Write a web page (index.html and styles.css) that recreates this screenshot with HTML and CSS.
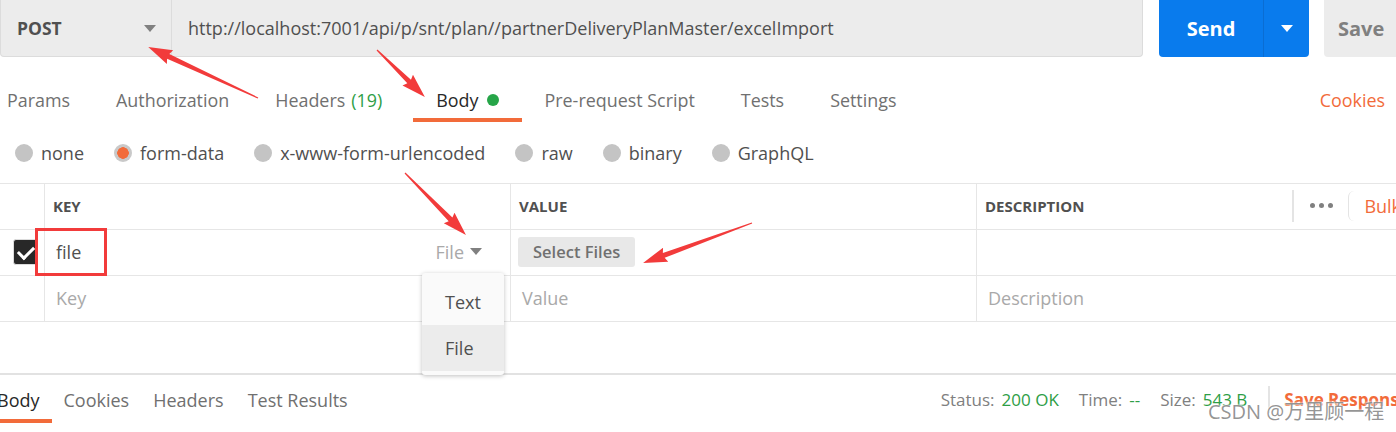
FILE: index.html
```html
<!DOCTYPE html>
<html lang="en">
  <head>
    <meta charset="UTF-8" />
    <meta name="viewport" content="width=device-width, initial-scale=1.0" />
    <title>Postman - excelImport</title>
    <link rel="stylesheet" href="styles.css">
  </head>
  <body>
    <div class="app">
      <div class="request-bar">
        <div class="method">POST <span class="caret"></span></div>
        <div class="url">http://localhost:7001/api/p/snt/plan//partnerDeliveryPlanMaster/excelImport</div>
        <div class="send-group">
          <button class="send">Send</button>
          <button class="send-more"><span class="caret caret-white"></span></button>
        </div>
        <button class="save">Save</button>
      </div>

      <div class="tabs">
        <a class="tab">Params</a>
        <a class="tab">Authorization</a>
        <a class="tab tab-headers">Headers <span class="count">(19)</span></a>
        <a class="tab active">Body <span class="dot"></span></a>
        <a class="tab">Pre-request Script</a>
        <a class="tab">Tests</a>
        <a class="tab">Settings</a>
        <a class="cookies">Cookies</a>
      </div>

      <div class="body-types">
        <label class="opt"><span class="radio"></span>none</label>
        <label class="opt"><span class="radio checked"></span>form-data</label>
        <label class="opt"><span class="radio"></span>x-www-form-urlencoded</label>
        <label class="opt"><span class="radio"></span>raw</label>
        <label class="opt"><span class="radio"></span>binary</label>
        <label class="opt"><span class="radio"></span>GraphQL</label>
      </div>

      <div class="kv-table">
        <div class="cell head"></div>
        <div class="cell head th">KEY</div>
        <div class="cell head th">VALUE</div>
        <div class="cell head th last">
          DESCRIPTION
          <div class="head-tools">
            <span class="sep"></span>
            <span class="dots"><i></i><i></i><i></i></span>
            <span class="bulk">Bulk Edit</span>
          </div>
        </div>

        <div class="cell check-cell"><span class="checkbox"></span></div>
        <div class="cell key-cell">
          <span class="value-text">file</span>
          <span class="type-select">File <span class="caret"></span></span>
          <ul class="type-menu">
            <li>Text</li>
            <li class="hover">File</li>
          </ul>
        </div>
        <div class="cell"><button class="select-files">Select Files</button></div>
        <div class="cell last"></div>

        <div class="cell"></div>
        <div class="cell placeholder">Key</div>
        <div class="cell placeholder">Value</div>
        <div class="cell placeholder last">Description</div>
      </div>

      <div class="response-bar">
        <div class="res-tabs">
          <a class="res-tab active">Body</a>
          <a class="res-tab">Cookies</a>
          <a class="res-tab">Headers</a>
          <a class="res-tab">Test Results</a>
        </div>
        <div class="res-meta">
          <span class="label">Status:</span><span class="ok">200 OK</span>
          <span class="label">Time:</span><span class="ok">--</span>
          <span class="label">Size:</span><span class="ok">543 B</span>
          <span class="meta-sep"></span>
          <span class="save-res">Save Response</span>
        </div>
      </div>

      <!-- red annotations drawn on top of the screenshot -->
      <svg class="marks" width="1396" height="432" viewBox="0 0 1396 432">
        <g fill="#f23b3b">
          <polygon transform="translate(258 98) rotate(204.9)" points="0,-0.6 99,-2.6 97,-7.5 121,0 97,7.5 99,2.6 0,0.6" />
          <polygon transform="translate(377 50) rotate(44.4)" points="0,-0.6 45,-2.6 43,-7.5 67,0 43,7.5 45,2.6 0,0.6" />
          <polygon transform="translate(405 173) rotate(45.5)" points="0,-0.6 65,-2.6 63,-7.5 87,0 63,7.5 65,2.6 0,0.6" />
          <polygon transform="translate(752 223) rotate(159.85)" points="0,-0.6 94,-2.6 92,-7.5 116,0 92,7.5 94,2.6 0,0.6" />
        </g>
        <rect x="36.5" y="229.5" width="69" height="45" fill="none" stroke="#f23b3b" stroke-width="3" />
      </svg>

      <div class="watermark">CSDN @万里顾一程</div>
    </div>
  </body>
</html>
```

FILE: styles.css
```css
body {
  margin: 0;
  font-family: "Open Sans", "Noto Sans CJK SC", sans-serif;
  color: #505050;
  background: #fff;
}

.app {
  position: relative;
  width: 1396px;
  height: 432px;
  overflow: hidden;
}

button {
  font-family: inherit;
  border: none;
  outline: none;
  padding: 0;
  cursor: pointer;
}

.caret {
  display: inline-block;
  width: 0;
  height: 0;
  border-left: 6px solid transparent;
  border-right: 6px solid transparent;
  border-top: 7px solid #808080;
}

.caret-white {
  border-top-color: #fff;
}

/* request bar */
.request-bar {
  display: flex;
  height: 57px;
}

.request-bar > * {
  flex-shrink: 0;
}

.method {
  box-sizing: border-box;
  width: 172px;
  display: flex;
  align-items: center;
  justify-content: space-between;
  padding: 0 15px 0 16px;
  background: #ececec;
  border: 1px solid #dcdcdc;
  border-top: none;
  border-radius: 0 0 0 4px;
  font-size: 17.5px;
  font-weight: 700;
}

.url {
  box-sizing: border-box;
  width: 971px;
  display: flex;
  align-items: center;
  padding-left: 16px;
  background: #ececec;
  border: 1px solid #dcdcdc;
  border-top: none;
  border-left: none;
  border-radius: 0 0 4px 0;
  font-size: 18px;
}

.send-group {
  display: flex;
  width: 150px;
  margin-left: 16px;
  background: #097bed;
  border-radius: 0 0 4px 4px;
}

.send {
  width: 104px;
  background: none;
  color: #fff;
  font-size: 20px;
  font-weight: 700;
}

.send-more {
  flex: 1;
  background: none;
  border-left: 1px solid #0a6dd3;
  display: flex;
  align-items: center;
  justify-content: center;
}

.save {
  width: 100px;
  margin-left: 15px;
  padding-left: 14px;
  text-align: left;
  background: #ececec;
  border-radius: 0 0 4px 4px;
  color: #808080;
  font-size: 20px;
  font-weight: 700;
}

/* request tabs */
.tabs {
  display: flex;
  align-items: flex-end;
  height: 65px;
  margin-left: -16px;
  font-size: 17.9px;
}

.tab {
  display: flex;
  align-items: center;
  padding: 0 23px 6px;
  line-height: 24px;
  border-bottom: 4px solid transparent;
  color: #707070;
}

.tab.active {
  border-bottom-color: #f26b3a;
  color: #282828;
}

.tab-headers {
  margin-right: 8px;
}

.count {
  margin-left: 6px;
  color: #2e9e46;
}

.dot {
  width: 12px;
  height: 12px;
  margin-left: 8px;
  border-radius: 50%;
  background: #26a548;
}

.cookies {
  margin-left: auto;
  padding: 0 11px 10px 0;
  line-height: 24px;
  color: #f26b3a;
}

/* body type radios */
.body-types {
  display: flex;
  align-items: center;
  gap: 30px;
  height: 61px;
  padding-left: 15px;
  font-size: 18px;
}

.opt {
  display: flex;
  align-items: center;
  gap: 8px;
}

.radio {
  width: 18px;
  height: 18px;
  border-radius: 50%;
  background: #c4c4c4;
}

.radio.checked {
  background: radial-gradient(circle, #f26b3a 0 5.5px, #c9c9c9 6px);
}

/* key / value table */
.kv-table {
  display: grid;
  grid-template-columns: 45px 466px 466px 1fr;
  grid-auto-rows: 46px;
  border-top: 1px solid #e6e6e6;
  padding-bottom: 51px;
  font-size: 18px;
}

.cell {
  box-sizing: border-box;
  display: flex;
  align-items: center;
  padding-bottom: 2px;
  border-right: 1px solid #e6e6e6;
  border-bottom: 1px solid #e6e6e6;
}

.cell.last {
  border-right: none;
}

.th {
  padding: 0 0 2px 8px;
  font-size: 15px;
  font-weight: 700;
  color: #505050;
}

.head-tools {
  display: flex;
  flex-shrink: 0;
  align-items: center;
  margin-left: 208px;
  height: 100%;
  font-size: 18px;
  font-weight: 400;
}

.head-tools .sep {
  width: 2px;
  height: 32px;
  background: #e4e4e4;
}

.dots {
  display: flex;
  gap: 4px;
  margin: 0 15px 0 16px;
}

.dots i {
  width: 5px;
  height: 5px;
  border-radius: 50%;
  background: #808080;
}

.bulk {
  padding-left: 15px;
  border-left: 1px solid #e4e4e4;
  border-radius: 6px 0 0 6px;
  line-height: 30px;
  white-space: nowrap;
  color: #f26b3a;
}

.check-cell {
  padding-left: 13px;
}

.checkbox {
  position: relative;
  width: 25px;
  height: 26px;
  box-sizing: border-box;
  border-radius: 3px;
  border: 1px solid #dcdcdc;
  background: #282828;
}

.checkbox::after {
  content: "";
  position: absolute;
  left: 7px;
  top: 3px;
  width: 7px;
  height: 13px;
  border-right: 3px solid #fff;
  border-bottom: 3px solid #fff;
  transform: rotate(45deg);
}

.key-cell {
  position: relative;
  justify-content: space-between;
  padding: 0 28px 2px 11px;
}

.type-select {
  display: flex;
  align-items: center;
  gap: 6px;
  color: #a9a9a9;
}

.type-menu {
  position: absolute;
  right: 6px;
  top: 43px;
  z-index: 10;
  width: 82px;
  margin: 0;
  padding: 6px 0 4px;
  list-style: none;
  background: #fafafa;
  border-radius: 3px;
  box-shadow: 0 1px 4px rgba(0, 0, 0, 0.25);
}

.type-menu li {
  height: 46px;
  line-height: 46px;
  padding-left: 23px;
  color: #505050;
}

.type-menu li.hover {
  background: #ececec;
}

.select-files {
  height: 30px;
  margin-left: 7px;
  padding: 0 15px;
  border-radius: 3px;
  background: #e8e8e8;
  color: #707070;
  font-size: 16.5px;
  font-weight: 600;
}

.placeholder {
  padding-left: 11px;
  color: #a9a9a9;
}

/* response bar */
.response-bar {
  display: flex;
  height: 58px;
  border-top: 2px solid #e2e2e2;
}

.res-tabs {
  display: flex;
  flex-shrink: 0;
  align-items: flex-end;
  margin-left: -15px;
  padding-bottom: 10px;
  font-size: 18px;
}

.res-tab {
  padding: 0 12px 7px;
  line-height: 24px;
  border-bottom: 4px solid transparent;
  color: #707070;
}

.res-tab.active {
  color: #282828;
  border-bottom-color: #f26b3a;
}

.res-meta {
  display: flex;
  flex-shrink: 0;
  align-items: center;
  height: 48px;
  margin-left: 581px;
  font-size: 17px;
  white-space: nowrap;
}

.res-meta .label {
  margin-right: 7px;
  color: #808080;
}

.res-meta .ok {
  margin-right: 20px;
  color: #2e9e46;
}

.meta-sep {
  width: 2px;
  height: 27px;
  margin: 0 14px 0 1px;
  background: #e4e4e4;
}

.save-res {
  font-weight: 700;
  color: #f26b3a;
}

/* overlays */
.marks {
  position: absolute;
  left: 0;
  top: 0;
  pointer-events: none;
}

.watermark {
  position: absolute;
  left: 1208px;
  top: 396px;
  font-size: 20px;
  color: rgba(130, 130, 130, 0.85);
  text-shadow: 0 0 2px #fff, 0 0 2px #fff;
  white-space: nowrap;
}
```
